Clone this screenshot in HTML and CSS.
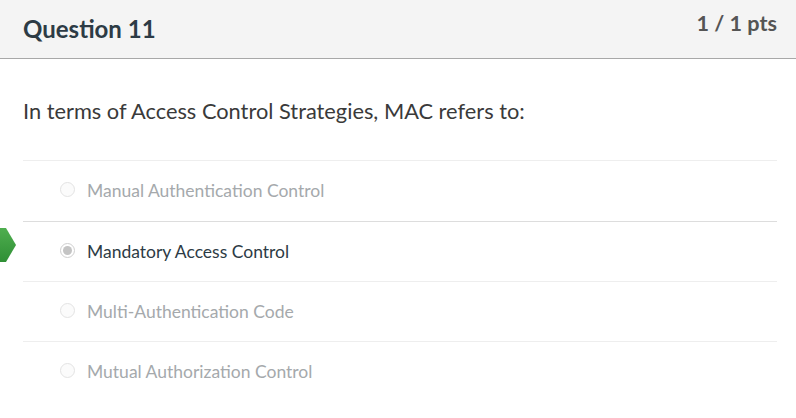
FILE: index.html
```html
<!DOCTYPE html>
<html lang="en">
<head>
<meta charset="utf-8">
<title>Question 11</title>
<link rel="stylesheet" href="styles.css">
</head>
<body>
<div class="header">
  <h2 class="title">Question 11</h2>
  <div class="pts">1 / 1 pts</div>
</div>
<div class="content">
  <p class="prompt">In terms of Access Control Strategies, MAC refers to:</p>
  <div class="answers">
    <div class="answer muted first"><span class="radio"></span><span>Manual Authentication Control</span></div>
    <div class="answer selected">
      <svg class="arrow" width="16" height="34" viewBox="0 0 16 34"><defs><linearGradient id="g" x1="0" y1="0" x2="0" y2="1"><stop offset="0" stop-color="#4fae4f"/><stop offset="1" stop-color="#2f8f35"/></linearGradient></defs><path d="M0 0H6L16 17L6 34H0Z" fill="url(#g)"/></svg>
      <span class="radio checked"></span><span>Mandatory Access Control</span>
    </div>
    <div class="answer muted"><span class="radio"></span><span>Multi-Authentication Code</span></div>
    <div class="answer muted"><span class="radio"></span><span>Mutual Authorization Control</span></div>
  </div>
</div>
</body>
</html>
```
FILE: styles.css
```css
html, body { margin: 0; padding: 0; background: #fff; }
body { width: 796px; height: 418px; overflow: hidden; font-family: Lato, "Liberation Sans", sans-serif; color: #2d3b45; }
.header { height: 58px; background: #f4f4f4; border-bottom: 1px solid #a8a8a8; display: flex; justify-content: space-between; padding: 0 19px 0 23px; }
.title { margin: 0; font-size: 24px; font-weight: 700; line-height: 58px; color: #2d3b45; }
.pts { font-size: 21.6px; font-weight: 700; line-height: 46px; color: #555; }
.content { padding: 0 19px 0 23px; }
.prompt { margin: 0; padding-top: 36px; height: 65px; font-size: 21.8px; line-height: 32px; color: #3a3a3a; }
.answers { border-top: 1px solid #eee; }
.answer { position: relative; height: 58px; display: flex; align-items: center; gap: 12px; padding: 0 0 1px 37px; font-size: 17.5px; border-bottom: 1px solid #eee; }
.answer.first { height: 59px; border-bottom-color: #ddd; }
.answer:last-child { border-bottom: 0; }
.muted { color: #a5a9ac; }
.selected { color: #2d3b45; }
.radio { width: 13px; height: 13px; border: 1px solid #e3e3e3; border-radius: 50%; background: #fbfbfb; position: relative; top: -1px; flex: none; }
.checked { border-color: #cfcfcf; background: #fff; }
.checked::after { content: ""; position: absolute; left: 2px; top: 2px; width: 9px; height: 9px; border-radius: 50%; background: #c4c4c4; }
.arrow { position: absolute; left: -23px; top: 6px; }
```
